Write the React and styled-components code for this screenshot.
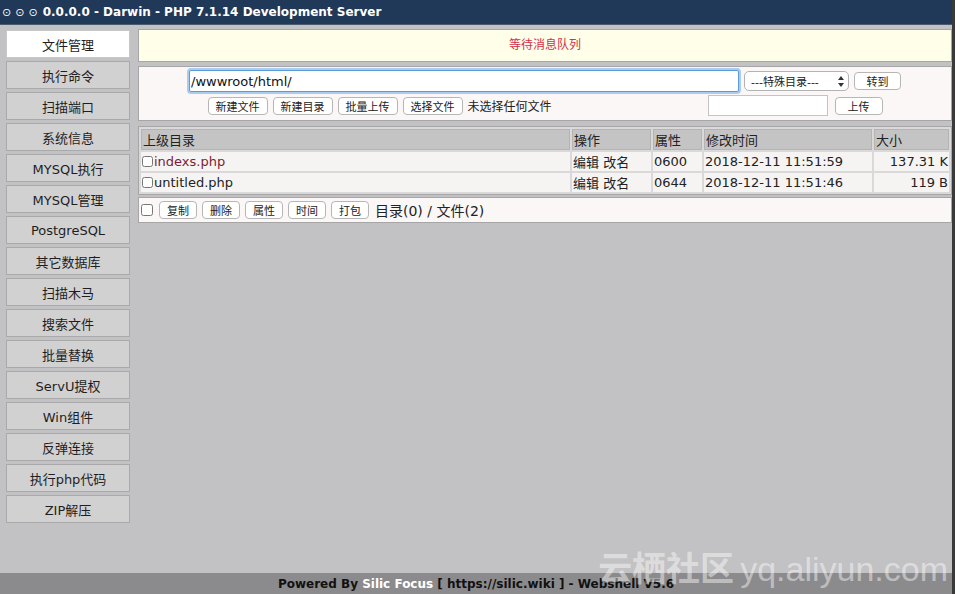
import styled, { createGlobalStyle } from "styled-components";

const GlobalStyle = createGlobalStyle`
  html, body {
    margin: 0;
    padding: 0;
    background: #ffffff;
  }
  body {
    font-family: "DejaVu Sans", "Noto Sans CJK SC", sans-serif;
    color: #222;
  }
`;

const Page = styled.div`
  display: flex;
  height: 594px;
  overflow: hidden;
`;

const Shell = styled.div`
  position: relative;
  width: 952px;
  height: 594px;
  display: flex;
  flex-direction: column;
  background: #c2c1c3;
  border-right: 3px solid #3a3a3a;
`;

const TitleBar = styled.div`
  height: 25px;
  background: #203959;
  color: #fff;
  font-weight: bold;
  font-size: 12px;
  display: flex;
  align-items: center;
  padding-left: 2px;
  gap: 1px;
  border-bottom: 1px solid #4a5b70;
  box-sizing: border-box;
`;

const Dots = styled.span`
  font-weight: normal;
  font-size: 11px;
  letter-spacing: 4px;
`;

const Body = styled.div`
  flex: 1;
  display: flex;
  gap: 8px;
  padding: 4px 0 0 6px;
`;

const Sidebar = styled.nav`
  width: 124px;
  margin-top: 1px;
  display: flex;
  flex-direction: column;
  gap: 3px;
`;

const NavItem = styled.div`
  height: 28px;
  box-sizing: border-box;
  display: flex;
  align-items: center;
  justify-content: center;
  font-size: 13px;
  color: #1e1e1e;
  background: ${(p) => (p.$active ? "#ffffff" : "#d2d1d2")};
  border: 1px solid ${(p) => (p.$active ? "#c8c8c8" : "#a9a9aa")};
`;

const Main = styled.main`
  flex: 1;
  display: flex;
  flex-direction: column;
`;

const Notice = styled.div`
  height: 33px;
  box-sizing: border-box;
  background: #fffee8;
  border: 1px solid #a6a6a6;
  color: #d3304c;
  font-size: 12px;
  display: flex;
  justify-content: center;
  padding-top: 5px;
`;

const Panel = styled.div`
  margin-top: 4px;
  background: #faf7f6;
  border: 1px solid #a6a6a6;
  padding: 3px 0 4px;
  display: flex;
  flex-direction: column;
  align-items: center;
  gap: 3px;
`;

const Row = styled.div`
  display: flex;
  align-items: center;
  gap: 5px;
`;

const PathInput = styled.input`
  width: 550px;
  height: 22px;
  box-sizing: border-box;
  font: 13px "DejaVu Sans", sans-serif;
  color: #111;
  padding: 0 1px;
  border: 1px solid #5e9bd6;
  box-shadow: 0 0 0 2px #a8cdf0;
  border-radius: 2px;
  outline: none;
`;

const Select = styled.div`
  width: 105px;
  height: 20px;
  box-sizing: border-box;
  border: 1px solid #b3b3b3;
  border-radius: 5px;
  background: #fff;
  font-size: 11px;
  display: flex;
  align-items: center;
  justify-content: space-between;
  padding: 0 4px 0 6px;
  svg {
    flex: none;
  }
`;

const Button = styled.button`
  height: 18px;
  min-width: ${(p) => p.$w || 0}px;
  box-sizing: border-box;
  padding: 0 7px;
  border: 1px solid #b6b6b6;
  border-radius: 4px;
  background: #fff;
  font: 11px "DejaVu Sans", "Noto Sans CJK SC", sans-serif;
  color: #222;
`;

const FilePick = styled.div`
  width: 300px;
  display: flex;
  align-items: center;
  gap: 5px;
  font-size: 12px;
`;

const UploadInput = styled.input`
  width: 120px;
  height: 21px;
  box-sizing: border-box;
  border: 1px solid #c4c4c4;
  background: #fff;
  outline: none;
`;

const Table = styled.table`
  margin-top: 5px;
  width: 100%;
  border: 1px solid #a6a6a6;
  border-spacing: 2px;
  background: #dad8d8;
  font-size: 13px;
  table-layout: fixed;
`;

const Th = styled.th`
  background: #c5c4c5;
  font-weight: normal;
  text-align: left;
  height: 19px;
  padding: 0 1px;
  border: 1px solid #b4b4b4;
  width: ${(p) => p.$w || "auto"};
`;

const Td = styled.td`
  background: #f6f4f3;
  height: 18px;
  padding: 0 1px;
  white-space: nowrap;
  text-align: ${(p) => (p.$right ? "right" : "left")};
`;

const Box = styled.input.attrs({ type: "checkbox" })`
  width: ${(p) => p.$size || 11}px;
  height: ${(p) => p.$size || 11}px;
  margin: 0 1px 0 0;
  vertical-align: -1px;
`;

const FileName = styled.span`
  color: ${(p) => (p.$hot ? "#7b1d33" : "#222")};
`;

const ActionBar = styled.div`
  margin-top: 2px;
  height: 26px;
  box-sizing: border-box;
  background: #faf7f6;
  border: 1px solid #a6a6a6;
  display: flex;
  align-items: center;
  gap: 5px;
  padding-left: 2px;
`;

const Summary = styled.span`
  font-size: 14px;
  margin-left: 1px;
`;

const Footer = styled.footer`
  height: 21px;
  background: #8b8a8c;
  font-size: 12px;
  font-weight: bold;
  color: #111;
  display: flex;
  align-items: center;
  justify-content: center;
  white-space: pre;
`;

const Brand = styled.span`
  color: #fff;
`;

const Watermark = styled.div`
  position: absolute;
  right: 4px;
  bottom: 3px;
  font-family: "Liberation Sans", "Noto Sans CJK SC", sans-serif;
  font-size: 34px;
  color: rgba(255, 255, 255, 0.45);
  white-space: nowrap;
  pointer-events: none;
  b {
    font-weight: bold;
    margin-right: 6px;
  }
`;

const UpDown = () => (
  <svg width="6" height="11" viewBox="0 0 6 11">
    <path d="M3 0 L6 4 L0 4 Z M3 11 L6 7 L0 7 Z" fill="#333" />
  </svg>
);

const navItems = [
  "文件管理", "执行命令", "扫描端口", "系统信息", "MYSQL执行", "MYSQL管理",
  "PostgreSQL", "其它数据库", "扫描木马", "搜索文件", "批量替换", "ServU提权",
  "Win组件", "反弹连接", "执行php代码", "ZIP解压",
];

const files = [
  { name: "indexs.php", perm: "0600", time: "2018-12-11 11:51:59", size: "137.31 K", hot: true },
  { name: "untitled.php", perm: "0644", time: "2018-12-11 11:51:46", size: "119 B" },
];

const App = () => (
  <>
    <GlobalStyle />
    <Page>
      <Shell>
        <TitleBar>
          <Dots>⊙⊙⊙</Dots>
          <span>0.0.0.0 - Darwin - PHP 7.1.14 Development Server</span>
        </TitleBar>
        <Body>
          <Sidebar>
            {navItems.map((item, i) => (
              <NavItem key={item} $active={i === 0}>{item}</NavItem>
            ))}
          </Sidebar>
          <Main>
            <Notice>等待消息队列</Notice>
            <Panel>
              <Row>
                <PathInput defaultValue="/wwwroot/html/" />
                <Select>
                  <span>---特殊目录---</span>
                  <UpDown />
                </Select>
                <Button $w={47}>转到</Button>
              </Row>
              <Row>
                <Button $w={60}>新建文件</Button>
                <Button $w={60}>新建目录</Button>
                <Button $w={59}>批量上传</Button>
                <FilePick>
                  <Button $w={60}>选择文件</Button>
                  <span>未选择任何文件</span>
                </FilePick>
                <UploadInput />
                <Button $w={48} style={{ marginLeft: 2 }}>上传</Button>
              </Row>
            </Panel>
            <Table>
              <thead>
                <tr>
                  <Th>上级目录</Th>
                  <Th $w="75px">操作</Th>
                  <Th $w="45px">属性</Th>
                  <Th $w="164px">修改时间</Th>
                  <Th $w="71px">大小</Th>
                </tr>
              </thead>
              <tbody>
                {files.map((f) => (
                  <tr key={f.name}>
                    <Td><Box /><FileName $hot={f.hot}>{f.name}</FileName></Td>
                    <Td>编辑 改名</Td>
                    <Td>{f.perm}</Td>
                    <Td>{f.time}</Td>
                    <Td $right>{f.size}</Td>
                  </tr>
                ))}
              </tbody>
            </Table>
            <ActionBar>
              <Box $size={12} />
              <Button>复制</Button>
              <Button>删除</Button>
              <Button>属性</Button>
              <Button>时间</Button>
              <Button>打包</Button>
              <Summary>目录(0) / 文件(2)</Summary>
            </ActionBar>
          </Main>
        </Body>
        <Footer>
          Powered By <Brand>Silic Focus</Brand> [ https://silic.wiki ] - Webshell V5.6
        </Footer>
        <Watermark><b>云栖社区</b>yq.aliyun.com</Watermark>
      </Shell>
    </Page>
  </>
);

export default App;
